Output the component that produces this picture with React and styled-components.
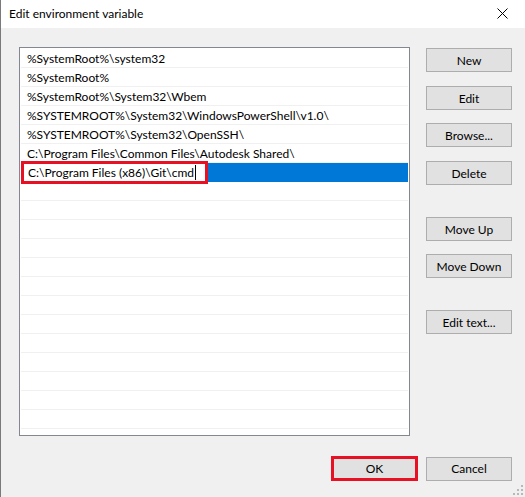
import React from "react";
import styled, { createGlobalStyle } from "styled-components";

const GlobalStyle = createGlobalStyle`
  html, body { margin: 0; padding: 0; background: #f0f0f0; }
  body { font-family: Lato, sans-serif; }
`;

const UI_FONT = `Lato, "Noto Sans", sans-serif`;

const Window = styled.div`
  position: relative;
  width: 525px;
  height: 497px;
  box-sizing: border-box;
  border-left: 1px solid #7a7a7a;
  background: #f0f0f0;
  display: flex;
  flex-direction: column;
  font-family: ${UI_FONT};
  font-size: 12px;
  color: #000;
  overflow: hidden;
`;

const TitleBar = styled.div`
  height: 28px;
  flex: none;
  background: #fff;
  display: flex;
  align-items: center;
  justify-content: space-between;
  padding: 0 0 2px 8px;
  box-sizing: border-box;
`;

const Title = styled.span`
  font-size: 12px;
`;

const CloseBox = styled.div`
  width: 46px;
  height: 26px;
  display: flex;
  align-items: center;
  justify-content: center;
`;

const Body = styled.div`
  flex: 1;
  display: flex;
  flex-direction: column;
  padding: 19px 13px 0 18px;
`;

const Main = styled.div`
  display: flex;
  gap: 16px;
`;

const List = styled.div`
  width: 391px;
  height: 389px;
  box-sizing: border-box;
  border: 1px solid #828790;
  background: #fff;
  padding: 1px;
  overflow: hidden;
`;

const Row = styled.div`
  height: 19px;
  box-sizing: border-box;
  border-bottom: 1px solid #f0f0f0;
  padding-left: 6px;
  display: flex;
  align-items: center;
  white-space: nowrap;
  background: ${(p) => (p.$selected ? "#0078d7" : "#fff")};
`;

const EditRow = styled(Row)`
  padding-left: 3px;
  align-items: flex-start;
  border-bottom-color: #0078d7;
`;

const Editor = styled.div`
  position: relative;
  z-index: 1;
  width: 181px;
  height: 17px;
  margin-top: 1px;
  box-sizing: border-box;
  background: #fff;
  padding-left: 4px;
  display: flex;
  align-items: center;
  outline: 3px solid #e81123;
`;

const Caret = styled.span`
  display: inline-block;
  width: 1px;
  height: 15px;
  background: #000;
  margin-left: 1px;
`;

const ButtonColumn = styled.div`
  display: flex;
  flex-direction: column;
  padding-top: 1px;
`;

const Button = styled.button`
  width: 86px;
  height: 24px;
  box-sizing: border-box;
  margin: 0;
  margin-top: ${(p) => p.$gap || 0}px;
  padding: 0;
  background: #e1e1e1;
  border: 1px solid #adadad;
  font-family: ${UI_FONT};
  font-size: 12px;
  color: #000;
  display: flex;
  align-items: center;
  justify-content: center;
`;

const HighlightButton = styled(Button)`
  width: 87px;
  height: 25px;
  border: 3px solid #e81123;
`;

const Footer = styled.div`
  display: flex;
  justify-content: flex-end;
  align-items: center;
  gap: 8px;
  margin-top: 20px;
`;

const Grip = styled.svg`
  position: absolute;
  right: 2px;
  bottom: 2px;
`;

const rows = [
  "%SystemRoot%\\system32",
  "%SystemRoot%",
  "%SystemRoot%\\System32\\Wbem",
  "%SYSTEMROOT%\\System32\\WindowsPowerShell\\v1.0\\",
  "%SYSTEMROOT%\\System32\\OpenSSH\\",
  "C:\\Program Files\\Common Files\\Autodesk Shared\\",
];

const gripDots = [
  [8, 0],
  [4, 4],
  [8, 4],
  [0, 8],
  [4, 8],
  [8, 8],
];

export default function App() {
  return (
    <>
      <GlobalStyle />
      <Window>
        <TitleBar>
          <Title>Edit environment variable</Title>
          <CloseBox>
            <svg width="11" height="11" viewBox="0 0 11 11">
              <path d="M0.5 0.5 L10.5 10.5 M10.5 0.5 L0.5 10.5" stroke="#000" strokeWidth="1" />
            </svg>
          </CloseBox>
        </TitleBar>
        <Body>
          <Main>
            <List>
              {rows.map((r) => (
                <Row key={r}>{r}</Row>
              ))}
              <EditRow $selected>
                <Editor>
                  C:\Program Files (x86)\Git\cmd
                  <Caret />
                </Editor>
              </EditRow>
              {Array.from({ length: 14 }).map((_, i) => (
                <Row key={"e" + i} />
              ))}
            </List>
            <ButtonColumn>
              <Button>New</Button>
              <Button $gap={14}>Edit</Button>
              <Button $gap={13}>Browse...</Button>
              <Button $gap={14}>Delete</Button>
              <Button $gap={32}>Move Up</Button>
              <Button $gap={13}>Move Down</Button>
              <Button $gap={32}>Edit text...</Button>
            </ButtonColumn>
          </Main>
          <Footer>
            <HighlightButton>OK</HighlightButton>
            <Button>Cancel</Button>
          </Footer>
        </Body>
        <Grip width="11" height="11" viewBox="0 0 11 11">
          {gripDots.map(([x, y]) => (
            <rect key={x + "-" + y} x={x + 1} y={y + 1} width="2" height="2" fill="#b8b8b8" />
          ))}
        </Grip>
      </Window>
    </>
  );
}
